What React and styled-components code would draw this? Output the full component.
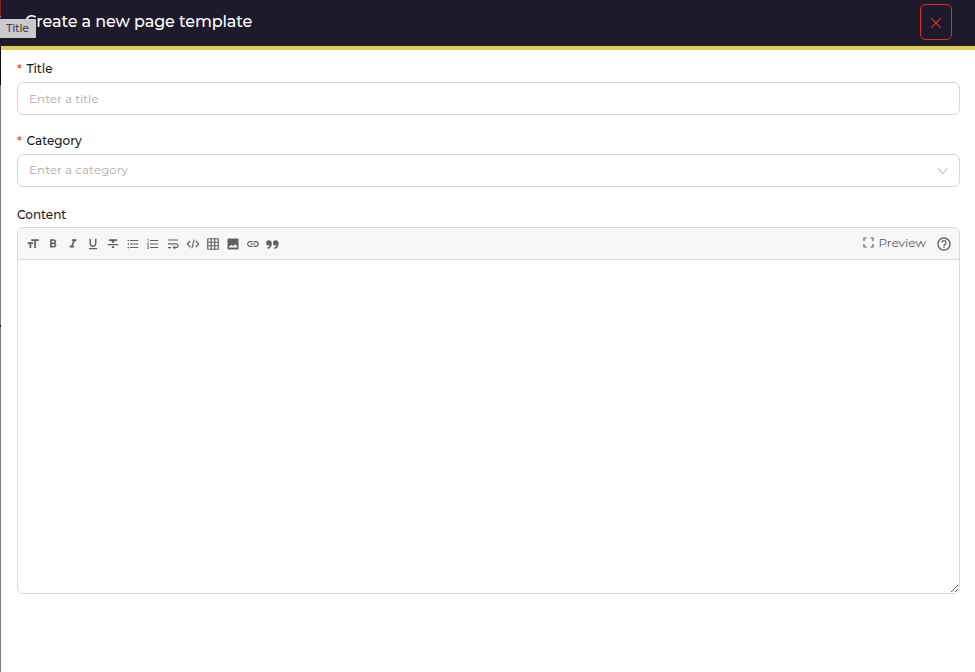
import React from 'react';
import styled, { createGlobalStyle } from 'styled-components';
import {
  MdFormatSize, MdFormatBold, MdFormatItalic, MdFormatUnderlined, MdFormatStrikethrough,
  MdFormatListBulleted, MdFormatListNumbered, MdGridOn, MdLink, MdHelpOutline,
} from 'react-icons/md';

const GlobalStyle = createGlobalStyle`
  * { box-sizing: border-box; }
  body {
    margin: 0;
    background: #fff;
    color: #1a1a1a;
    font-family: Montserrat, Inter, sans-serif;
    font-size: 12px;
    overflow: hidden;
  }
`;

const Page = styled.div`
  position: relative;
  display: flex;
  width: 975px;
  height: 672px;
`;

const Backdrop = styled.div`
  flex: 0 0 1px;
  background: linear-gradient(#8c201f 0 16px, #77777a 16px 18px, #15141f 18px 46px, #0e0d17 46px 85px, #808080 85px 325px, #111 325px 327px, #808080 327px);
`;

const Drawer = styled.main`
  flex: 1;
  display: flex;
  flex-direction: column;
`;

const Header = styled.header`
  display: flex;
  justify-content: space-between;
  height: 50px;
  padding: 4px 23px 0 24px;
  background: #1c1a2b;
  border-bottom: 4px solid #e2cb50;
`;

const Heading = styled.h1`
  margin: 8px 0 0;
  color: #fff;
  font-size: 16px;
  font-weight: 500;
  line-height: 20px;
  letter-spacing: -0.11px;
  white-space: nowrap;
`;

const CloseButton = styled.button`
  display: flex;
  align-items: center;
  justify-content: center;
  width: 32px;
  height: 36px;
  padding: 2px 0 0;
  color: #dc3030;
  background: transparent;
  border: 1px solid #dc3030;
  border-radius: 6px;
`;

const Tooltip = styled.div`
  position: absolute;
  left: 0;
  top: 19px;
  width: 36px;
  height: 19px;
  padding-left: 6px;
  color: #454548;
  background: #cac9ce;
  border-radius: 0 1px 1px 0;
  font-size: 11px;
  font-weight: 500;
  line-height: 18px;
  letter-spacing: -0.2px;
`;

const Form = styled.form`
  display: flex;
  flex-direction: column;
  padding: 10px 15px 0 16px;
`;

const Field = styled.div`
  display: flex;
  flex-direction: column;
  height: ${(p) => p.$height}px;
`;

const Label = styled.label`
  display: flex;
  height: 22px;
  padding-top: ${(p) => p.$top || 0}px;
  font-size: 12px;
  font-weight: 500;
  line-height: 18px;
  letter-spacing: ${(p) => p.$spacing || 0}px;
`;

const Required = styled.span`
  width: 9.5px;
  padding-top: 1px;
  color: #f0383c;
  font-size: 12px;
  letter-spacing: 0;
`;

const Control = styled.div`
  display: flex;
  align-items: center;
  justify-content: space-between;
  height: 33px;
  padding: 0 11px;
  color: #adadad;
  background: #fff;
  border: 1px solid #d5d5d5;
  border-radius: 6px;
`;

const Placeholder = styled.span`
  height: 18px;
  font-size: 12px;
  line-height: 18px;
  margin-top: ${(p) => p.$top || 0}px;
`;

const Editor = styled.div`
  height: 367px;
  border: 1px solid #d9d9d9;
  border-radius: 6px;
  overflow: hidden;
`;

const Toolbar = styled.div`
  display: flex;
  align-items: center;
  justify-content: space-between;
  height: 32px;
  padding: 0 7px 0 8px;
  color: #606060;
  background: #f7f7f7;
  border-bottom: 1px solid #d9d9d9;
`;

const Tools = styled.div`
  display: flex;
  gap: 6px;
`;

const Tool = styled.button`
  display: flex;
  align-items: center;
  justify-content: center;
  width: 14px;
  height: 14px;
  padding: 0;
  color: inherit;
  background: none;
  border: 0;
`;

const Actions = styled.div`
  display: flex;
  align-items: center;
`;

const Preview = styled.span`
  margin: -1px 10px 0 4px;
  font-size: 12px;
  line-height: 18px;
`;

const FullscreenGlyph = styled.svg`
  margin-top: -3px;
`;

const Area = styled.textarea`
  display: block;
  width: 100%;
  height: 333px;
  padding: 8px 11px;
  background: #fff;
  border: 0;
  outline: 0;
  resize: vertical;
`;

function CloseIcon() {
  return (
    <svg width="12" height="12" viewBox="0 0 12 12" fill="none" stroke="currentColor" strokeWidth="1.3">
      <path d="M1.4 1.4l9.2 9.2M10.6 1.4L1.4 10.6" />
    </svg>
  );
}

function ChevronIcon() {
  return (
    <svg width="11" height="10" viewBox="0 0 11 10" fill="none" stroke="currentColor" strokeWidth="1">
      <path d="M1.2 2l4.6 6 4.6-6" />
    </svg>
  );
}

function WrapIcon() {
  return (
    <svg width="14" height="14" viewBox="0 0 14 14" fill="none" stroke="currentColor" strokeWidth="1.2">
      <path d="M2 3h10M2 6.8h8.2a1.9 1.9 0 010 3.8H7.5M2 10.6h3" />
      <path fill="currentColor" stroke="none" d="M9 8.6v4L6.7 10.6z" />
    </svg>
  );
}

function CodeIcon() {
  return (
    <svg width="14" height="14" viewBox="0 0 14 14" fill="none" stroke="currentColor" strokeWidth="1.15">
      <path d="M4.2 4L1.3 7l2.9 3M9.8 4l2.9 3-2.9 3M8.2 2.6L5.8 11.4" />
    </svg>
  );
}

function ImageIcon() {
  return (
    <svg width="14" height="14" viewBox="0 0 14 14">
      <path fill="currentColor" fillRule="evenodd" d="M2.6 1.5h8.8q1.1 0 1.1 1.1v8.8q0 1.1-1.1 1.1H2.6q-1.1 0-1.1-1.1V2.6q0-1.1 1.1-1.1zM3 10.6h8V9L9.2 7.3 7.4 9 5.4 8 3 9.5z" />
    </svg>
  );
}

function QuoteIcon() {
  return (
    <svg width="14" height="14" viewBox="0 0 14 14">
      <g fill="none" stroke="currentColor" strokeWidth="1.5">
        <path d="M4.9 5.8c.3 3-.8 4.9-3.3 5.5M11.7 5.8c.3 3-.8 4.9-3.3 5.5" />
      </g>
      <circle cx="2.9" cy="5.9" r="2.7" fill="currentColor" />
      <circle cx="9.7" cy="5.9" r="2.7" fill="currentColor" />
    </svg>
  );
}

const tools = [
  ['Heading', MdFormatSize], ['Bold', MdFormatBold], ['Italic', MdFormatItalic],
  ['Underline', MdFormatUnderlined], ['Strikethrough', MdFormatStrikethrough],
  ['Bulleted list', MdFormatListBulleted], ['Numbered list', MdFormatListNumbered],
  ['Wrap', WrapIcon], ['Code', CodeIcon], ['Table', MdGridOn], ['Image', ImageIcon],
  ['Link', MdLink], ['Quote', QuoteIcon],
];

export default function App() {
  return (
    <Page>
      <GlobalStyle />
      <Backdrop />
      <Drawer>
        <Header>
          <Heading>Create a new page template</Heading>
          <CloseButton aria-label="Close"><CloseIcon /></CloseButton>
        </Header>
        <Form>
          <Field $height={72}>
            <Label><Required>*</Required>Title</Label>
            <Control><Placeholder>Enter a title</Placeholder></Control>
          </Field>
          <Field $height={73}>
            <Label><Required>*</Required>Category</Label>
            <Control>
              <Placeholder $top={-2}>Enter a category</Placeholder>
              <ChevronIcon />
            </Control>
          </Field>
          <Label $top={1}>Content</Label>
          <Editor>
            <Toolbar>
              <Tools>
                {tools.map(([name, Icon]) => (
                  <Tool key={name} type="button" aria-label={name}><Icon size={14} /></Tool>
                ))}
              </Tools>
              <Actions>
                <FullscreenGlyph width="11" height="11" viewBox="0 0 11 11" fill="none" stroke="currentColor" strokeWidth="1.2">
                  <path d="M1 4V1h2.6M7.4 1h2.6v3M10 7v3H7.4M3.6 10H1V7" />
                </FullscreenGlyph>
                <Preview>Preview</Preview>
                <MdHelpOutline size={16} />
              </Actions>
            </Toolbar>
            <Area aria-label="Content" />
          </Editor>
        </Form>
      </Drawer>
      <Tooltip>Title</Tooltip>
    </Page>
  );
}
